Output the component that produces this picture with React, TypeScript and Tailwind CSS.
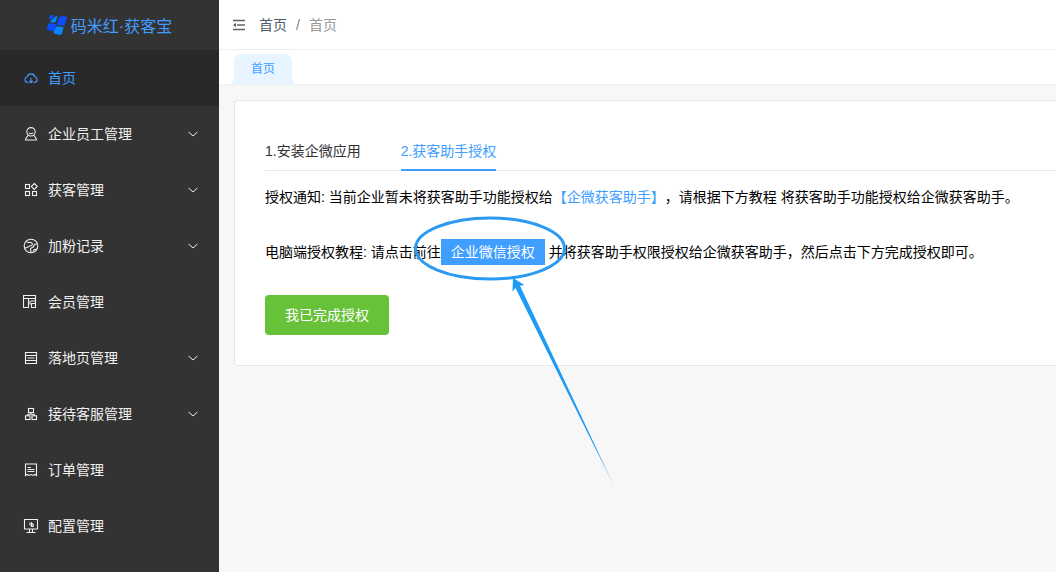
import { useState } from "react";
import type { ReactNode } from "react";

type MenuItem = { key: string; label: string; icon: ReactNode; hasChildren?: boolean };

const MENU: MenuItem[] = [
  { key: "home", label: "首页", icon: (
    <>
      <path d="M5.5 12.5H4.7A2.9 2.9 0 0 1 4.2 6.8a4 4 0 0 1 7.7 0 2.9 2.9 0 0 1-.5 5.7h-.9" />
      <path d="M8 7.800v5M6.200 10.800 8 12.600l1.800-1.800" />
    </>
  )},
  { key: "staff", label: "企业员工管理", hasChildren: true, icon: (
    <>
      <circle cx="8" cy="5.8" r="4.2" />
      <path d="M5.400 9 2.700 12.800v1.200h10.600v-1.200L10.600 9" />
      <path d="M6 6.800c1.100 1 2.900 1 4 0" />
    </>
  )},
  { key: "customer", label: "获客管理", hasChildren: true, icon: (
    <>
      <rect x="2.500" y="2.500" width="4" height="4" />
      <rect x="2.500" y="9.500" width="4" height="4" />
      <rect x="9.500" y="9.500" width="4" height="4" />
      <path d="m11.300 1.500 3 3-3 3-3-3z" />
    </>
  )},
  { key: "records", label: "加粉记录", hasChildren: true, icon: (
    <>
      <circle cx="8" cy="8" r="6.800" />
      <path d="M3.500 3.500C5 5.600 6 4 8 4.500c2.400.8 1.400 2.900-.4 3.200C5.300 8 5.800 9.900 2 10" />
      <path d="M14.300 6c-2-.3-3.200.5-3.400 1.900C10.700 9.900 8 9 7.500 11c-.3 1.300.9 2 .3 3.600M10.200 13.500c0-1.900 1.300-2.300 3.300-2" />
    </>
  )},
  { key: "members", label: "会员管理", icon: (
    <>
      <path d="M.5 1.500h12v3H.5zM.5 4.500v9h5v-9M12.500 4.500v9H8.500v-4h4" />
      <path d="M7.500 7h5M7 7v3.500" />
    </>
  )},
  { key: "landing", label: "落地页管理", hasChildren: true, icon: (
    <path d="M2.500 2.500h11v11h-11zM2.500 5.500h11M4.500 8h7M2.500 10.500h11" />
  )},
  { key: "service", label: "接待客服管理", hasChildren: true, icon: (
    <>
      <rect x="5.500" y="2.500" width="5" height="4" />
      <rect x="2.500" y="9.800" width="4.500" height="3.700" />
      <rect x="9" y="9.800" width="4.500" height="3.700" />
      <path d="M8 6.500v1.700M4.700 9.800V8.200h6.600v1.600" />
    </>
  )},
  { key: "orders", label: "订单管理", icon: (
    <path d="M2.500 13.500v-11.500h11v11.500l-1.600-1-1.800 1-2.100-1-2.100 1-1.800-1zM4.500 5.500H8M4.500 7.500h7M4.500 9.500h7" />
  )},
  { key: "config", label: "配置管理", icon: (
    <>
      <path d="M1.500 1.500h13v9.500h-13zM6.500 11v3M9.500 11v3M3.500 14.500h9" />
      <path d="M7 4.500v3M8.500 5v3.500h1.700V6.500z" />
    </>
  )},
];

function Logo() {
  return (
    <svg viewBox="0 0 20 20" className="size-5" aria-hidden="true">
      <path d="M6.600 3.200 9 .9q1.700-.8 1.300.8L9 6q-.5 1.700-2 1.600L4 7.400q-1.700-.3-.6-1.400z" fill="#0a84ff" />
      <path d="M3 .3 5.500.1q1.500 0 1.100 1.200L6 2.800 3.600 5Q2 4.600 2.200 2.600z" fill="#0a4dff" />
      <path d="M13.400 1.600 18.600 1.200q1.600 0 1.300 1.500l-1.900 6.700q-.4 1.400-1.900 1.200L11.200 10q-1.500-.3-1-1.700l1.800-5.500q.3-1.100 1.400-1.200z" fill="#0a4dff" />
      <path d="m2.200 8.300 6 .7q1.500.2 1.100 1.600l-1.600 5q-.5 1.300-1.800 1L1.200 14.800Q-.2 14.400 0 13l.8-3.700q.3-1.100 1.400-1z" fill="#0a4dff" />
      <path d="m10.300 11.300 5 .5q1.500.2 1.100 1.600l-1.600 5.400q-.5 1.400-1.900 1.100l-5-1.200q-1.500-.4-1.100-1.800l2-4.700q.4-1 1.500-.9z" fill="#0a84ff" />
    </svg>
  );
}

// hand-drawn style hint: circle around the link and an arrow pointing at it
function LinkHint() {
  return (
    <svg viewBox="0 0 204 274" className="pointer-events-none absolute -top-6 -left-7 h-[274px] w-[204px] max-w-none" aria-hidden="true">
      <defs>
        <linearGradient id="hintFade" x1="0" y1="0" x2="0" y2="1">
          <stop offset="0.8" stopColor="#1e9bf5" />
          <stop offset="1" stopColor="#1e9bf5" stopOpacity="0.5" />
        </linearGradient>
      </defs>
      <ellipse cx="77" cy="33.500" rx="74.500" ry="30.500" fill="none" stroke="#2b9af0" strokeWidth="3" />
      <path d="m100 63 11.500 7-4.500.8L202 273 102.500 73l-3 3.500z" fill="url(#hintFade)" />
    </svg>
  );
}

export default function App() {
  const [active, setActive] = useState("home");
  const [step, setStep] = useState(2);

  const stepClass = (n: number) =>
    n === step
      ? "h-10 border-b-2 border-[#409eff] pt-0.5 text-[#409eff]"
      : "h-10 border-b-2 border-transparent pt-0.5 text-[#303133]";

  return (
    <div className="flex min-h-screen bg-[#f7f7f7] text-sm text-black [font-family:'Liberation_Sans','Noto_Sans_CJK_SC',sans-serif] [text-spacing-trim:space-all]">
      <aside className="w-[219px] shrink-0 bg-[#333333]">
        <div className="flex h-[50px] items-center justify-center gap-1 text-base text-[#409eff]">
          <Logo />
          <span className="pt-1">码米红·获客宝</span>
        </div>
        <nav>
          {MENU.map((m) => (
            <button key={m.key} type="button" onClick={() => setActive(m.key)}
              className={m.key === active
                ? "flex h-14 w-full items-center gap-[9px] bg-[#292929] pr-5 pl-[23px] text-[#409eff]"
                : "flex h-14 w-full items-center gap-[9px] pr-5 pl-[23px] text-[#f0f0f0]"}>
              <svg viewBox="0 0 16 16" fill="none" stroke="currentColor" strokeWidth="1.100" className="size-4" aria-hidden="true">
                {m.icon}
              </svg>
              <span>{m.label}</span>
              {m.hasChildren && (
                <svg viewBox="0 0 12 12" fill="none" stroke="currentColor" className="ml-auto size-3" aria-hidden="true">
                  <path d="m1.500 4 4.500 4L10.500 4" />
                </svg>
              )}
            </button>
          ))}
        </nav>
      </aside>

      <div className="min-w-0 flex-1">
        <header className="flex h-[50px] items-center border-b border-[#f0f0f0] bg-white pl-3.5">
          <button type="button" aria-label="收起菜单" className="text-[#606266]">
            <svg viewBox="0 0 12 12" fill="none" stroke="currentColor" strokeWidth="1.600" className="size-3" aria-hidden="true">
              <path d="M0 1.500h12M4 6h8M0 10.500h12" />
              <path d="M0 6l3-2.200v4.400z" fill="currentColor" stroke="none" />
            </svg>
          </button>
          <nav className="ml-3.5 flex items-center">
            <a href="#home" className="text-[#515a6e]">首页</a>
            <span className="mx-[9px] text-[#808080]">/</span>
            <span className="text-[#999999]">首页</span>
          </nav>
        </header>

        <div className="flex h-[35px] items-end border-b border-[#f0f0f0] bg-white pl-3">
          <button type="button" className="relative h-[30px] w-16 text-xs text-[#409eff]">
            <svg viewBox="0 0 64 30" className="absolute inset-0 h-[30px] w-16" aria-hidden="true">
              <path d="M0 30q3-3 3-8V8q0-8 8-8h42q8 0 8 8v14q0 5 3 8z" fill="#e8f4ff" />
            </svg>
            <span className="relative">首页</span>
          </button>
        </div>

        <main className="pt-[15px] pl-[15px]">
          <section className="rounded-l border-y border-l border-[#e4e7ed] bg-white py-[30px] pl-[30px]">
            <div role="tablist" className="flex gap-10 shadow-[inset_0_-1px_0_#e4e7ed]">
              <button type="button" role="tab" aria-selected={step === 1} onClick={() => setStep(1)} className={stepClass(1)}>
                1.安装企微应用
              </button>
              <button type="button" role="tab" aria-selected={step === 2} onClick={() => setStep(2)} className={stepClass(2)}>
                2.获客助手授权
              </button>
            </div>

            <p className="mt-[15px] leading-[22px]">
              授权通知: 当前企业暂未将获客助手功能授权给<span className="text-[#409eff]">【企微获客助手】</span>，请根据下方教程 将获客助手功能授权给企微获客助手。
            </p>
            <p className="mt-[31px] leading-[26px]">
              电脑端授权教程: 请点击前往<a href="#auth" className="relative inline-block bg-[#409eff] px-2.5 text-white">企业微信授权<LinkHint /></a> 并将获客助手权限授权给企微获客助手，然后点击下方完成授权即可。
            </p>
            <button type="button" className="mt-[30px] h-10 rounded bg-[#67c23a] px-5 text-white">我已完成授权</button>
          </section>
        </main>
      </div>
    </div>
  );
}
